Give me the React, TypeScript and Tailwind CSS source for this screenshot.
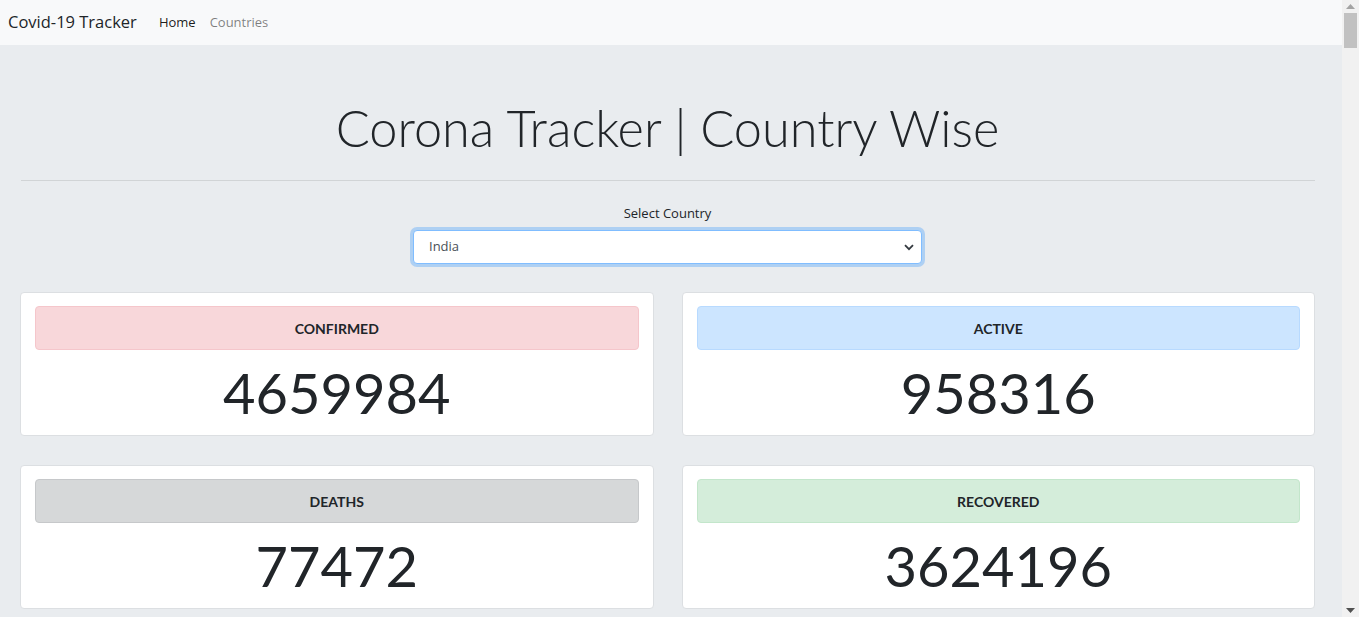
const stats = [
  { label: 'CONFIRMED', value: 4659984, box: 'bg-[#f8d7da] border-[#f5c6cb]' },
  { label: 'ACTIVE', value: 958316, box: 'bg-[#cce5ff] border-[#b8daff]' },
  { label: 'DEATHS', value: 77472, box: 'bg-[#d6d8d9] border-[#c6c8ca]' },
  { label: 'RECOVERED', value: 3624196, box: 'bg-[#d4edda] border-[#c3e6cb]' },
];

function StatCard({ label, value, box }: { label: string; value: number; box: string }) {
  return (
    <div className="bg-white border border-[#dcdfe2] rounded-[4px] px-[14px] pt-[13px] pb-[9px]">
      <div className={`h-[44px] rounded-[4px] border flex items-center justify-center ${box}`}>
        <span className="font-['Lato',sans-serif] font-bold text-[14px] text-[#212529]">{label}</span>
      </div>
      <div className="mt-[9px] text-center font-['Lato',sans-serif] text-[56px] leading-[67px] text-[#212529]">
        {value}
      </div>
    </div>
  );
}

// fake browser scrollbar, the page is scrolled to the top
function Scrollbar() {
  return (
    <div className="w-[17px] shrink-0 bg-[#f1f1f1] flex flex-col items-center">
      <svg width="9" height="5" viewBox="0 0 9 5" className="mt-[4px]">
        <path d="M0 5 L4.5 0 L9 5 Z" fill="#a3a3a3" />
      </svg>
      <div className="mt-[4px] w-[13px] h-[35px] bg-[#c1c1c1]" />
      <div className="flex-1" />
      <svg width="9" height="5" viewBox="0 0 9 5" className="mb-[4px]">
        <path d="M0 0 L4.5 5 L9 0 Z" fill="#505050" />
      </svg>
    </div>
  );
}

export default function App() {
  return (
    <div className="h-screen flex overflow-hidden bg-[#e9ecef] font-['Open_Sans',sans-serif]">
      <div className="flex-1 min-w-0 flex flex-col">
        {/* Navbar */}
        <nav className="h-[45px] shrink-0 bg-[#f8f9fa] flex items-center pl-2">
          <span className="text-[16.5px] text-[#212529] mr-[22px]">Covid-19 Tracker</span>
          <a className="text-[13px] text-black/90 mr-[14px]">Home</a>
          <a className="text-[13px] text-black/50">Countries</a>
        </nav>

        <div className="pl-5 pr-[27px] pt-[53px] pb-8">
          <h1 className="text-center font-['Lato',sans-serif] font-light text-[50.5px] leading-[60px] text-[#212529]">
            Corona Tracker | Country Wise
          </h1>
          <hr className="mt-[22px] ml-px border-0 border-t border-black/10" />

          {/* Country select */}
          <div className="flex flex-col items-center mt-[22px]">
            <label className="text-[13px] text-[#212529] leading-[20px]">Select Country</label>
            <div className="mt-[7px] w-[509px] h-[34px] bg-white border border-[#80bdff] rounded-[4px] shadow-[0_0_0_3px_rgba(0,123,255,0.25)] flex items-center justify-between pl-[15px] pr-[7px]">
              <span className="text-[13px] text-[#495057]">India</span>
              <svg width="10" height="7" viewBox="0 0 10 7" fill="none">
                <path d="M1 1.2 L5 5.2 L9 1.2" stroke="#343a40" strokeWidth="1.8" />
              </svg>
            </div>
          </div>

          {/* Stats */}
          <div className="grid grid-cols-2 gap-x-[28px] gap-y-[29px] mt-[28px]">
            {stats.map((s) => (
              <StatCard key={s.label} {...s} />
            ))}
          </div>
        </div>
      </div>
      <Scrollbar />
    </div>
  );
}
